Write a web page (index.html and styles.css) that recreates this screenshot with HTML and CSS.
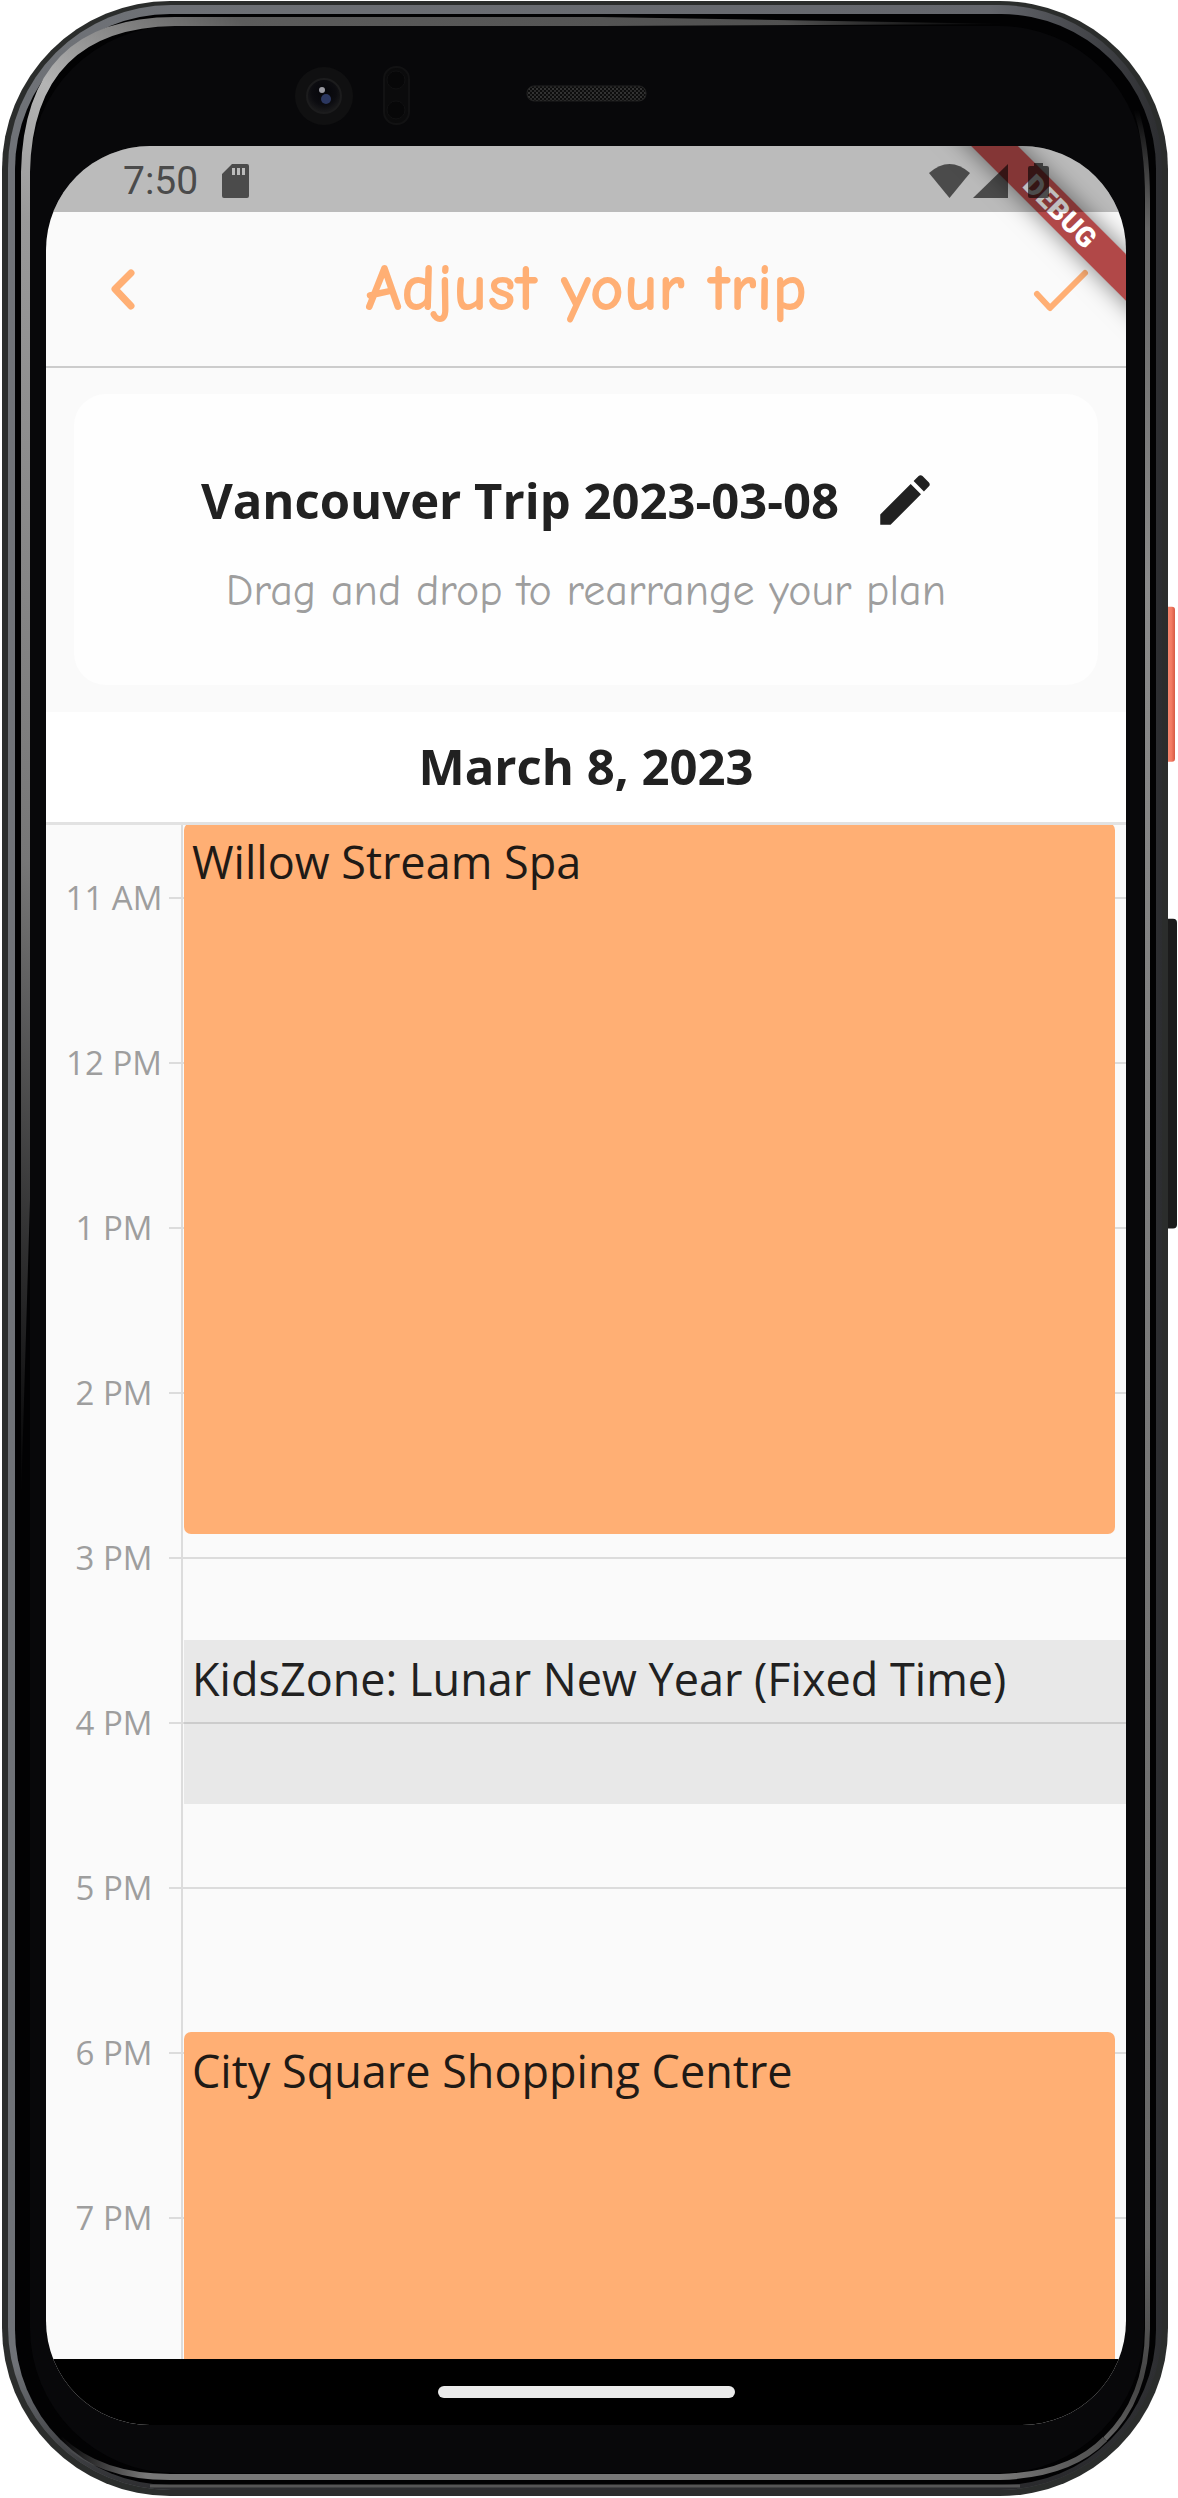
FILE: index.html
```html
<!DOCTYPE html>
<html lang="en">
<head>
<meta charset="utf-8">
<meta name="viewport" content="width=device-width, initial-scale=1">
<title>Adjust your trip</title>
<link rel="stylesheet" href="styles.css">
</head>
<body>
<div class="phone">
  <svg class="phone-frame" viewBox="0 0 1178 2498" preserveAspectRatio="none" aria-hidden="true">
    <defs>
      <linearGradient id="rim" x1="0" y1="0" x2="1" y2="0">
        <stop offset="0" stop-color="#6f7277"/><stop offset=".85" stop-color="#64666c"/><stop offset="1" stop-color="#2c2d30"/>
      </linearGradient>
      <linearGradient id="rimLow" x1="0" y1="0" x2="0" y2="1">
        <stop offset=".95" stop-color="#1c1c1e" stop-opacity="0"/><stop offset="1" stop-color="#1c1c1e" stop-opacity=".8"/>
      </linearGradient>
      <linearGradient id="shineA" gradientUnits="userSpaceOnUse" x1="25" y1="1500" x2="1010" y2="22">
        <stop offset="0" stop-color="#777" stop-opacity="0"/><stop offset=".3" stop-color="#777"/>
        <stop offset=".6" stop-color="#999"/><stop offset=".67" stop-color="#b4b4b4"/><stop offset=".76" stop-color="#5c5c5c"/>
        <stop offset=".93" stop-color="#505050"/><stop offset="1" stop-color="#333" stop-opacity="0"/>
      </linearGradient>
      <linearGradient id="shineB" gradientUnits="userSpaceOnUse" x1="0" y1="110" x2="0" y2="2480">
        <stop offset="0" stop-color="#888" stop-opacity="0"/><stop offset=".05" stop-color="#666"/>
        <stop offset=".2" stop-color="#8a8a8a"/><stop offset=".9" stop-color="#666"/><stop offset=".96" stop-color="#444"/><stop offset="1" stop-color="#777"/>
      </linearGradient>
      <linearGradient id="shineC" gradientUnits="userSpaceOnUse" x1="60" y1="0" x2="1130" y2="0">
        <stop offset="0" stop-color="#777" stop-opacity="0"/><stop offset=".08" stop-color="#777"/>
        <stop offset=".88" stop-color="#777"/><stop offset="1" stop-color="#444"/>
      </linearGradient>
      <linearGradient id="power" x1="0" y1="0" x2="1" y2="0">
        <stop offset="0" stop-color="#d9553f"/><stop offset=".3" stop-color="#f58a72"/><stop offset=".7" stop-color="#f37a62"/><stop offset="1" stop-color="#d65a45"/>
      </linearGradient>
      <radialGradient id="lens" cx=".5" cy=".4" r=".6">
        <stop offset="0" stop-color="#05050a"/><stop offset=".6" stop-color="#0c0c10"/><stop offset="1" stop-color="#1c1c1d"/>
      </radialGradient>
      <pattern id="mesh" width="4" height="4" patternUnits="userSpaceOnUse">
        <rect width="4" height="4" fill="#0c0c0c"/><rect width="2" height="2" fill="#333"/><rect x="2" y="2" width="2" height="2" fill="#2a2a2a"/>
      </pattern>
    </defs>
    <rect x="1163" y="607" width="12" height="155" rx="3" fill="url(#power)"/>
    <rect x="1163" y="919" width="14" height="310" rx="4" fill="#1b1b1b"/>
    <rect x="2" y="1" width="1166" height="2496" rx="168" fill="#2b2d2c"/>
    <rect x="8" y="5" width="1154" height="2486" rx="163" fill="url(#rim)"/>
    <rect x="8" y="5" width="1154" height="2486" rx="163" fill="url(#rimLow)"/>
    <rect x="15" y="14" width="1141" height="2472" rx="155" fill="#020203"/>
    <rect x="30" y="26" width="1114" height="2448" rx="145" fill="#08080a"/>
    <path d="M21 1500V172Q24 17 175 17H600L1010 24L600 26H175Q33 28 30 172V1200Z" fill="url(#shineA)"/>
    <path d="M1136 110Q1147.500 145 1147.500 200V2330Q1147 2400 1105 2440" fill="none" stroke="url(#shineB)" stroke-width="5"/>
    <path d="M60 2440Q100 2478 170 2478H1000Q1070 2476 1105 2440" fill="none" stroke="url(#shineC)" stroke-width="6"/>
    <path d="M150 2487H1020" stroke="#555" stroke-width="3"/>
    <circle cx="324" cy="96" r="29" fill="#101011"/>
    <circle cx="324" cy="96" r="17" fill="url(#lens)" stroke="#1c1c1d" stroke-width="2"/>
    <ellipse cx="326" cy="99" rx="5" ry="5" fill="#2b3760"/>
    <circle cx="322" cy="90" r="3" fill="#9a9aa2"/>
    <rect x="384" y="67" width="25" height="57" rx="12" fill="#0b0b0c" stroke="#121213" stroke-width="2"/>
    <circle cx="396" cy="80" r="9" fill="#070708" stroke="#111112"/>
    <circle cx="396" cy="110" r="9" fill="#070708" stroke="#111112"/>
    <rect x="527" y="86" width="119" height="15" rx="7" fill="url(#mesh)" stroke="#222"/>
  </svg>

  <main class="screen">
    <div class="status-bar">
      <span>7:50</span>
      <svg class="sd-icon" width="28" height="36" viewBox="0 0 28 36" aria-hidden="true"><path fill="#4b4b4b" fill-rule="evenodd" d="M10 1H25Q27 1 27 3V33Q27 35 25 35H2Q0 35 0 33V11ZM10 5V12H13V5ZM15 5V12H18V5ZM20 5V12H23V5Z"/></svg>
      <svg class="signal-icons" width="121" height="36" viewBox="0 0 121 36" aria-hidden="true" fill="#000" fill-opacity=".6">
        <path d="M0 10Q20.500 -8 41 10L20.500 35Z"/>
        <path d="M44 35L79 1V35Z"/>
        <path d="M105 0H114V3H118Q120 3 120 5V33Q120 35 118 35H101Q99 35 99 33V5Q99 3 101 3H105Z"/>
      </svg>
    </div>
    <div class="debug-banner">DEBUG</div>

    <header class="app-bar">
      <button class="icon-button" type="button" aria-label="Back">
        <svg width="100" height="100" viewBox="0 0 100 100"><path d="M64 34L48 50L64 67" fill="none" stroke="currentColor" stroke-width="7" stroke-linecap="round" stroke-linejoin="round"/></svg>
      </button>
      <h1>Adjust your trip</h1>
      <button class="icon-button" type="button" aria-label="Done">
        <svg width="100" height="100" viewBox="0 0 100 100"><path d="M32 55L45 69L80 34" fill="none" stroke="currentColor" stroke-width="6" stroke-linecap="round" stroke-linejoin="round"/></svg>
      </button>
    </header>

    <section class="trip-card">
      <div class="trip-title">
        <h2>Vancouver Trip 2023-03-08</h2>
        <button class="edit-button" type="button" aria-label="Edit trip name">
          <svg width="66" height="66" viewBox="0 0 24 24"><path fill="currentColor" d="M3 17.250V21h3.750L17.810 9.940l-3.750-3.750L3 17.250zM20.710 7.040c.39-.39.39-1.020 0-1.410l-2.340-2.340c-.39-.39-1.020-.39-1.410 0l-1.830 1.830 3.750 3.750 1.830-1.830z"/></svg>
        </button>
      </div>
      <p>Drag and drop to rearrange your plan</p>
    </section>

    <h2 class="date">March 8, 2023</h2>

    <section class="timeline">
      <ol class="hours">
        <li><span>11 AM</span></li>
        <li><span>12 PM</span></li>
        <li><span>1 PM</span></li>
        <li><span>2 PM</span></li>
        <li><span>3 PM</span></li>
        <li><span>4 PM</span></li>
        <li><span>5 PM</span></li>
        <li><span>6 PM</span></li>
        <li><span>7 PM</span></li>
      </ol>
      <div class="events">
        <article class="event" style="height: 711px">Willow Stream Spa</article>
        <article class="event fixed" style="height: 164px; margin-top: 106px">KidsZone: Lunar New Year (Fixed Time)</article>
        <article class="event continues" style="height: 327px; margin-top: 228px">City Square Shopping Centre</article>
      </div>
    </section>

    <div class="nav-bar"><span class="home-pill"></span></div>
  </main>
</div>
</body>
</html>
```
FILE: styles.css
```css
* { box-sizing: border-box; }

body {
  margin: 0;
  background: #fff;
  color: #212121;
  font-family: "Open Sans", "Noto Sans", sans-serif;
}

h1, h2, p, ol { margin: 0; padding: 0; }

button {
  padding: 0;
  border: 0;
  background: none;
  color: inherit;
  cursor: pointer;
}

svg { display: block; }

.phone {
  position: relative;
  padding: 146px 52px 72px 46px;
}

.phone-frame {
  position: absolute;
  inset: 0;
  width: 100%;
  height: 100%;
}

.screen {
  position: relative;
  display: flex;
  flex-direction: column;
  overflow: hidden;
  border-radius: 104px;
  background: #fafafa;
}

/* Status bar tints whatever lies under it, the banner included */
.status-bar {
  position: relative;
  z-index: 2;
  display: flex;
  align-items: center;
  gap: 24px;
  height: 66px;
  padding: 4px 76px 0 77px;
  background: rgba(0, 0, 0, 0.25);
  color: #4b4b4b;
  font: 39px/44px Roboto, sans-serif;
}

.signal-icons { margin-left: auto; }

.debug-banner {
  position: absolute;
  z-index: 1;
  top: 49px;
  right: -84px;
  width: 300px;
  height: 33px;
  background: rgba(156, 22, 22, 0.78);
  box-shadow: 0 0 24px rgba(0, 0, 0, 0.5);
  color: #fff;
  font: 900 28px/33px Roboto, sans-serif;
  text-align: center;
  transform: rotate(45deg);
}

.app-bar {
  display: grid;
  grid-template-columns: 100px 1fr 100px;
  align-items: center;
  height: 156px;
  padding: 0 21px;
  border-bottom: 2px solid #ccc;
  color: #ffaf74;
}

.app-bar h1 {
  font: 700 66px/76px "Comic Neue", Inter, sans-serif;
  text-align: center;
}

.trip-card {
  display: flex;
  flex-direction: column;
  align-items: center;
  margin: 26px 28px 27px;
  padding: 44px 0 65px;
  border-radius: 32px;
  background: #fefefe;
}

.trip-title {
  display: flex;
  align-items: center;
}

.trip-title h2, .date {
  font-size: 49px;
  font-weight: 700;
  line-height: 68px;
}

.edit-button {
  display: grid;
  place-items: center;
  width: 132px;
  height: 124px;
}

.trip-card p {
  color: #9e9e9e;
  font: 400 44px/58px "Comic Neue", Inter, sans-serif;
}

.date {
  padding: 20px 0 22px;
  background: #fff;
  text-align: center;
}

.timeline {
  display: grid;
  grid-template-columns: 135px 1fr;
  overflow: hidden;
  border-top: 3px solid #e2e2e2;
}

.hours {
  grid-area: 1 / 1 / 2 / 3;
  height: 0;
  margin-top: -10px;
  list-style: none;
}

.hours li {
  display: flex;
  align-items: center;
  height: 165px;
  color: #9e9e9e;
  font-size: 33px;
  line-height: 45px;
}

.hours span {
  width: 123px;
  padding-left: 13px;
  text-align: center;
}

.hours li::after {
  content: "";
  flex: 1;
  height: 2px;
  background: #dcdcdc;
}

.events {
  position: relative;
  grid-area: 1 / 2;
  margin-top: -2px;
  padding-left: 1px;
  border-left: 2px solid #dcdcdc;
}

.event {
  margin-right: 11px;
  padding: 9px 8px;
  border-radius: 7px;
  background: #ffaf74;
  color: #1f1a16;
  font-size: 45px;
  line-height: 60px;
}

.event.fixed {
  margin-right: 0;
  border-radius: 0;
  background: rgba(0, 0, 0, 0.07);
  color: #212121;
}

.event.continues { border-radius: 7px 7px 0 0; }

.nav-bar {
  display: grid;
  place-items: center;
  height: 66px;
  background: #000;
}

.home-pill {
  width: 297px;
  height: 12px;
  border-radius: 6px;
  background: #ebebeb;
}
```
